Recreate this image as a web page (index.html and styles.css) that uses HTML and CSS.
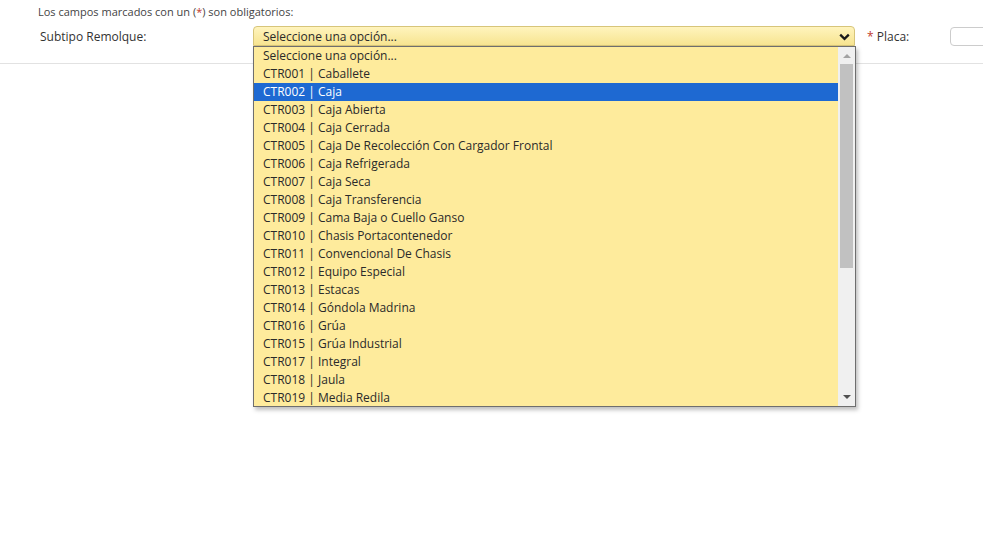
FILE: index.html
```html
<!DOCTYPE html>
<html lang="es">
<head>
<meta charset="utf-8">
<title>Subtipo Remolque</title>
<link rel="stylesheet" href="styles.css">
</head>
<body>
<div class="page">
  <p class="note">Los campos marcados con un (<span class="req">*</span>) son obligatorios:</p>
  <div class="row">
    <label class="label">Subtipo Remolque:</label>
    <div class="select">
      <span class="select-text">Seleccione una opción...</span>
      <svg class="chev" width="11" height="8" viewBox="0 0 11 8"><path d="M1.2 1.6 L5.5 5.8 L9.8 1.6" fill="none" stroke="#1a1a1a" stroke-width="2.3"/></svg>
    </div>
    <label class="label2"><span class="req">*</span> Placa:</label>
    <div class="input"></div>
  </div>
  <div class="divider"></div>

  <div class="dropdown">
    <ul class="options">
      <li>Seleccione una opción...</li>
      <li>CTR001 | Caballete</li>
      <li class="sel">CTR002 | Caja</li>
      <li>CTR003 | Caja Abierta</li>
      <li>CTR004 | Caja Cerrada</li>
      <li>CTR005 | Caja De Recolección Con Cargador Frontal</li>
      <li>CTR006 | Caja Refrigerada</li>
      <li>CTR007 | Caja Seca</li>
      <li>CTR008 | Caja Transferencia</li>
      <li>CTR009 | Cama Baja o Cuello Ganso</li>
      <li>CTR010 | Chasis Portacontenedor</li>
      <li>CTR011 | Convencional De Chasis</li>
      <li>CTR012 | Equipo Especial</li>
      <li>CTR013 | Estacas</li>
      <li>CTR014 | Góndola Madrina</li>
      <li>CTR016 | Grúa</li>
      <li>CTR015 | Grúa Industrial</li>
      <li>CTR017 | Integral</li>
      <li>CTR018 | Jaula</li>
      <li>CTR019 | Media Redila</li>
    </ul>
    <div class="scrollbar">
      <div class="arrow up"><svg width="8" height="5" viewBox="0 0 8 5"><path d="M0 5 L4 1 L8 5Z" fill="#a3a3a3"/></svg></div>
      <div class="track"><div class="thumb"></div></div>
      <div class="arrow down"><svg width="8" height="5" viewBox="0 0 8 5"><path d="M0 0 L4 4 L8 0Z" fill="#505050"/></svg></div>
    </div>
  </div>
</div>
</body>
</html>
```

FILE: styles.css
```css
html, body {
  margin: 0;
  padding: 0;
  background: #fff;
}
body {
  font-family: "Open Sans", "DejaVu Sans", sans-serif;
  color: #333;
}
.page {
  position: relative;
  width: 983px;
  height: 549px;
  overflow: hidden;
}
.note {
  margin: 0;
  padding: 5px 0 0 38px;
  font-size: 11px;
  line-height: 14px;
  color: #444;
}
.req {
  color: #c0392b;
}
.row {
  display: flex;
  align-items: center;
  height: 22px;
  margin-top: 6px;
}
.label {
  width: 213px;
  padding-left: 40px;
  box-sizing: content-box;
  font-size: 12px;
  color: #333;
  flex: none;
}
.select {
  flex: none;
  width: 602px;
  height: 20px;
  box-sizing: border-box;
  border: 1px solid #d7c57a;
  border-radius: 4px 4px 0 0;
  background: linear-gradient(#fff4bd, #f7e490);
  display: flex;
  align-items: center;
  justify-content: space-between;
  padding: 0 4px 0 9px;
  font-size: 12px;
  color: #2a2a2a;
}
.select-text {
  line-height: 18px;
  padding-top: 1px;
}
.chev {
  display: block;
  margin-top: 1px;
}
.label2 {
  flex: none;
  margin-left: 12px;
  width: 83px;
  font-size: 12px;
  color: #333;
}
.input {
  flex: none;
  width: 60px;
  height: 19px;
  box-sizing: border-box;
  border: 1px solid #ccc;
  border-radius: 4px;
  background: #fff;
}
.divider {
  margin-top: 16px;
  height: 1px;
  background: #e2e2e2;
}
.dropdown {
  position: absolute;
  left: 253px;
  top: 46px;
  width: 603px;
  height: 361px;
  box-sizing: border-box;
  border: 1px solid #6e6e6e;
  background: #feeb9c;
  box-shadow: 2px 3px 4px rgba(0, 0, 0, 0.25);
  display: flex;
}
.options {
  list-style: none;
  margin: 0;
  padding: 0;
  flex: 1;
  font-size: 12px;
  color: #2a2a2a;
}
.options li {
  height: 18px;
  line-height: 18px;
  padding-left: 9px;
  white-space: nowrap;
}
.options li.sel {
  background: #1e69d2;
  color: #fff;
}
.scrollbar {
  flex: none;
  width: 17px;
  background: #f0f0f0;
  display: flex;
  flex-direction: column;
}
.arrow {
  height: 17px;
  display: flex;
  align-items: center;
  justify-content: center;
}
.arrow svg {
  display: block;
}
.track {
  flex: 1;
  padding: 0 2px;
}
.thumb {
  height: 204px;
  background: #c1c1c1;
}
```
